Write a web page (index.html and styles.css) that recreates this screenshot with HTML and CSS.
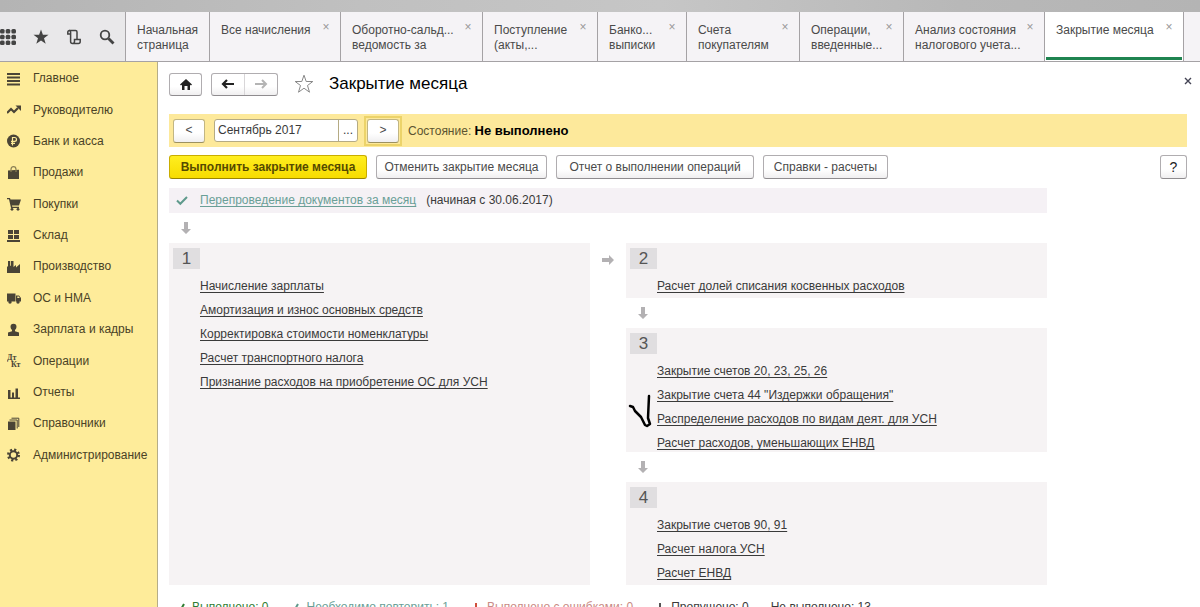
FILE: index.html
```html
<!DOCTYPE html>
<html lang="ru">
<head>
<meta charset="utf-8">
<title>Закрытие месяца</title>
<link rel="stylesheet" href="styles.css">
</head>
<body>
<div class="titlebar"></div>
<header class="topbar">
  <div class="tools">
    <button class="tool" aria-label="Меню"><svg width="16" height="16" viewBox="0 0 16 16"><g fill="#444"><rect x="0" y="0" width="4.600" height="4.600" rx="1.500"/><rect x="5.700" y="0" width="4.600" height="4.600" rx="1.500"/><rect x="11.400" y="0" width="4.600" height="4.600" rx="1.500"/><rect x="0" y="5.700" width="4.600" height="4.600" rx="1.500"/><rect x="5.700" y="5.700" width="4.600" height="4.600" rx="1.500"/><rect x="11.400" y="5.700" width="4.600" height="4.600" rx="1.500"/><rect x="0" y="11.400" width="4.600" height="4.600" rx="1.500"/><rect x="5.700" y="11.400" width="4.600" height="4.600" rx="1.500"/><rect x="11.400" y="11.400" width="4.600" height="4.600" rx="1.500"/></g></svg></button>
    <button class="tool" aria-label="Избранное"><svg width="16" height="16" viewBox="0 0 16 16"><path fill="#444" d="M8 .5l1.900 5.300h5.600l-4.500 3.400 1.700 5.600L8 11.500l-4.700 3.300L5 9.200.5 5.800h5.600z"/></svg></button>
    <button class="tool" aria-label="История"><svg width="16" height="16" viewBox="0 0 16 16" fill="none" stroke="#444" stroke-width="1.500"><path d="M4.500 5H1.800V3.200Q1.800 1.500 3.500 1.500h6Q11 1.500 11 3v7.500h3.200v2Q14.200 14.500 12.500 14.500H6.500Q4.600 14.500 4.600 12.500V3Q4.600 1.500 3.300 1.500M11 10.500H8.500v2Q8.500 14.500 6.500 14.500"/></svg></button>
    <button class="tool" aria-label="Поиск"><svg width="16" height="16" viewBox="0 0 16 16" fill="none" stroke="#444"><circle cx="6" cy="6" r="4.300" stroke-width="1.800"/><path d="M9.500 9.500l5 5" stroke-width="2.800"/></svg></button>
  </div>
  <nav class="tabs">
    <div class="tab"><a href="#">Начальная<br>страница</a></div>
    <div class="tab"><a href="#">Все начисления</a><button class="close" aria-label="Закрыть"></button></div>
    <div class="tab"><a href="#">Оборотно-сальд...<br>ведомость за</a><button class="close" aria-label="Закрыть"></button></div>
    <div class="tab"><a href="#">Поступление<br>(акты,...</a><button class="close" aria-label="Закрыть"></button></div>
    <div class="tab"><a href="#">Банко...<br>выписки</a><button class="close" aria-label="Закрыть"></button></div>
    <div class="tab"><a href="#">Счета<br>покупателям</a><button class="close" aria-label="Закрыть"></button></div>
    <div class="tab"><a href="#">Операции,<br>введенные...</a><button class="close" aria-label="Закрыть"></button></div>
    <div class="tab"><a href="#">Анализ состояния<br>налогового учета...</a><button class="close" aria-label="Закрыть"></button></div>
    <div class="tab tab-active"><a href="#">Закрытие месяца</a><button class="close" aria-label="Закрыть"></button></div>
    <div class="tab tab-rest"></div>
  </nav>
</header>
<div class="layout">
  <aside class="sidebar">
    <ul class="menu">
      <li><a href="#"><svg viewBox="0 0 14 14"><path d="M0 1h13v2H0zM0 4.500h13v2H0zM0 8h13v2H0zM0 11.500h13v2H0z"/></svg>Главное</a></li>
      <li><a href="#"><svg viewBox="0 0 14 14"><path d="M0 10l4-4 3 3 4-4" fill="none" stroke="#4a4436" stroke-width="2.200"/><path d="M8.500 2.500H14V8z"/></svg>Руководителю</a></li>
      <li><a href="#"><svg viewBox="0 0 14 14"><circle cx="6.500" cy="7" r="6.500"/><path d="M5.500 11.500V3.500h2q2 0 2 1.900t-2 1.900H4M4 9.300h4" fill="none" stroke="#feec9a" stroke-width="1.200"/></svg>Банк и касса</a></li>
      <li><a href="#"><svg viewBox="0 0 14 14"><path d="M1 4.500l11-.8V13H1z"/><path d="M4 6V3.500Q4 .7 6.500.7T9 3.500V6" fill="none" stroke="#8b8055" stroke-width="1.200"/></svg>Продажи</a></li>
      <li><a href="#"><svg viewBox="0 0 14 14"><path d="M0 1h3l.5 1.500H14L12 8.500H5l.3 1.200H12V11H4L2 2.300H0z"/><circle cx="5" cy="12.300" r="1.400"/><circle cx="11" cy="12.300" r="1.400"/></svg>Покупки</a></li>
      <li><a href="#"><svg viewBox="0 0 14 14"><path d="M1 1h5v4H1zM7 1h5v4H7zM1 6h5v4H1zM7 6h5v4H7zM0 11h13v2H0z"/></svg>Склад</a></li>
      <li><a href="#"><svg viewBox="0 0 14 14"><path d="M0 13V7l1-1V1h2.200v5L4 5.500V1h2.500v6L9 5v2.500L13 4v9z"/></svg>Производство</a></li>
      <li><a href="#"><svg viewBox="0 0 14 14"><path d="M0 2.500h8.500v8H0zM9 4.500h3L14 7v3.500H9z"/><path d="M10.300 5.500h1.500L12.800 7h-2.500z" fill="#feec9a"/><circle cx="3" cy="11" r="1.700"/><circle cx="11" cy="11" r="1.700"/></svg>ОС и НМА</a></li>
      <li><a href="#"><svg viewBox="0 0 14 14"><path d="M6.500.8Q9.500.8 9.500 4 9.300 6 8 7v1.300l4 1.200V13H1V9.500l4-1.200V7Q3.700 6 3.500 4 3.500.8 6.500.8z"/></svg>Зарплата и кадры</a></li>
      <li><a href="#"><svg viewBox="0 0 14 14" class="ledger"><text x="0" y="6">Дт</text><text x="4" y="13">Кт</text></svg>Операции</a></li>
      <li><a href="#"><svg viewBox="0 0 14 14"><path d="M1 4h2.500v7.500H1zM5 6.500h2v5H5zM8.500 2.500H11v9H8.500zM1 11.500h12V13H1z"/></svg>Отчеты</a></li>
      <li><a href="#"><svg viewBox="0 0 14 14"><path d="M1 4.500h7.500V13H1z"/><path d="M2.500 3h7.700v8.500M4.500 1.200h7.300V10" fill="none" stroke="#4a4436" stroke-width="1"/></svg>Справочники</a></li>
      <li><a href="#"><svg viewBox="0 0 14 14"><circle cx="6.500" cy="7" r="5.300" fill="none" stroke="#4a4436" stroke-width="2.400" stroke-dasharray="2.100 2.060"/><circle cx="6.500" cy="7" r="3.700" fill="none" stroke="#4a4436" stroke-width="2"/></svg>Администрирование</a></li>
    </ul>
  </aside>
  <main class="page">
    <div class="heading">
      <button class="btn icon-btn" aria-label="Домой"><svg width="14" height="13" viewBox="0 0 14 13"><path fill="#222" d="M7 1l6 5.500-1 1-1-.8V12H8.500V8h-3v4H3V6.700l-1 .8-1-1z"/></svg></button>
      <div class="history">
        <button aria-label="Назад"><svg width="14" height="10" viewBox="0 0 14 10"><path fill="none" stroke="#222" stroke-width="2.200" d="M13 5H2M6 1L2 5l4 4"/></svg></button>
        <button aria-label="Вперед"><svg width="14" height="10" viewBox="0 0 14 10"><path fill="none" stroke="#b4b4b4" stroke-width="2" d="M1 5h11M8 1l4 4-4 4"/></svg></button>
      </div>
      <button class="plain star" aria-label="В избранное"><svg width="20" height="20" viewBox="0 0 20 20"><path fill="#fff" stroke="#888" d="M10 1.200l2.200 6.300h6.600l-5.300 4 2 6.700-5.500-4-5.500 4 2-6.700-5.300-4h6.600z"/></svg></button>
      <h1>Закрытие месяца</h1>
      <button class="plain page-close" aria-label="Закрыть"><svg width="8" height="8" viewBox="0 0 8 8"><path stroke="#445" stroke-width="1.400" d="M1 1l6 6M7 1L1 7"/></svg></button>
    </div>
    <div class="period">
      <button class="btn step">&lt;</button>
      <div class="field"><input type="text" value="Сентябрь 2017" aria-label="Период"><button aria-label="Выбрать">...</button></div>
      <span class="focus"><button class="btn step">&gt;</button></span>
      <span class="state">Состояние: <b>Не выполнено</b></span>
    </div>
    <div class="commands">
      <button class="btn primary">Выполнить закрытие месяца</button>
      <button class="btn cancel">Отменить закрытие месяца</button>
      <button class="btn report">Отчет о выполнении операций</button>
      <button class="btn refs">Справки - расчеты</button>
      <button class="btn help">?</button>
    </div>
    <div class="flow">
      <div class="repost">
        <svg width="12" height="10" viewBox="0 0 12 10"><path d="M1 4.500l3.300 3.300L11 1" fill="none" stroke="#5f9a8c" stroke-width="2"/></svg>
        <a href="#">Перепроведение документов за месяц</a>
        <span>(начиная с 30.06.2017)</span>
      </div>
      <div class="connector"><svg width="10" height="12" viewBox="0 0 10 12"><path d="M3 0h4v7h3l-5 5-5-5h3z"/></svg></div>
      <div class="stages">
        <section class="panel">
          <h2>1</h2>
          <ul>
            <li><a href="#">Начисление зарплаты</a></li>
            <li><a href="#">Амортизация и износ основных средств</a></li>
            <li><a href="#">Корректировка стоимости номенклатуры</a></li>
            <li><a href="#">Расчет транспортного налога</a></li>
            <li><a href="#">Признание расходов на приобретение ОС для УСН</a></li>
          </ul>
        </section>
        <div class="across"><svg width="12" height="10" viewBox="0 0 12 10"><path d="M0 3v4h7v3l5-5-5-5v3z"/></svg></div>
        <div class="column">
          <section class="panel">
            <h2>2</h2>
            <ul><li><a href="#">Расчет долей списания косвенных расходов</a></li></ul>
          </section>
          <div class="connector"><svg width="10" height="12" viewBox="0 0 10 12"><path d="M3 0h4v7h3l-5 5-5-5h3z"/></svg></div>
          <section class="panel panel-tight">
            <h2>3</h2>
            <ul>
              <li><a href="#">Закрытие счетов 20, 23, 25, 26</a></li>
              <li><a href="#">Закрытие счета 44 "Издержки обращения"</a></li>
              <li><a href="#">Распределение расходов по видам деят. для УСН</a></li>
              <li><a href="#">Расчет расходов, уменьшающих ЕНВД</a></li>
            </ul>
            <svg class="pen-mark" width="24" height="34" viewBox="0 0 24 34"><path d="M2 12l3 1 2 4 6 6 4 8 2 1 3-2-2-6 1-22" fill="none" stroke="#000" stroke-width="2.500" stroke-linecap="round" stroke-linejoin="round"/></svg>
          </section>
          <div class="connector"><svg width="10" height="12" viewBox="0 0 10 12"><path d="M3 0h4v7h3l-5 5-5-5h3z"/></svg></div>
          <section class="panel">
            <h2>4</h2>
            <ul>
              <li><a href="#">Закрытие счетов 90, 91</a></li>
              <li><a href="#">Расчет налога УСН</a></li>
              <li><a href="#">Расчет ЕНВД</a></li>
            </ul>
          </section>
        </div>
      </div>
      <div class="legend">
        <span class="done"><svg width="10" height="10" viewBox="0 0 10 10"><path d="M1 5l3 3 4-7" fill="none" stroke="#2f7d32" stroke-width="2"/></svg>Выполнено: 0</span>
        <span class="repeat"><svg width="10" height="10" viewBox="0 0 10 10"><path d="M1 5l3 3 4-7" fill="none" stroke="#5f9a8c" stroke-width="2"/></svg>Необходимо повторить: 1</span>
        <span class="errors"><svg width="10" height="10" viewBox="0 0 10 10"><path d="M5 0v6M5 8v2" stroke="#d0503c" stroke-width="2"/></svg>Выполнено с ошибками: 0</span>
        <span><svg width="10" height="10" viewBox="0 0 10 10"><path d="M5 0v9M2 6l3 3 3-3" fill="none" stroke="#555" stroke-width="2"/></svg>Пропущено: 0</span>
        <span>Не выполнено: 13</span>
      </div>
    </div>
  </main>
</div>
</body>
</html>
```
FILE: styles.css
```css
* { box-sizing: border-box; }
body {
  margin: 0;
  height: 100vh;
  overflow: hidden;
  display: flex;
  flex-direction: column;
  background: #fff;
  color: #3a3a3a;
  font: 12px/15px "Liberation Sans", Arial, sans-serif;
}
button, input { font: inherit; color: inherit; }
button { padding: 0; border: 0; background: none; }
a { color: inherit; text-decoration: none; }
ul { list-style: none; margin: 0; padding: 0; }
svg { flex: none; display: block; }

.titlebar { flex: none; height: 12px; background: linear-gradient(90deg, #b4b4b4, #c0c0c0 30%, #c6c6c6 55%, #b8b8b8 80%, #b4b4b4); }
.topbar { flex: none; display: flex; height: 50px; border-bottom: 1px solid #a5a2a5; background: #e9e8ea; }
.tools { flex: none; width: 125px; display: flex; align-items: center; gap: 17px; }
.tool { width: 16px; }
.tabs { flex: 1; display: grid; grid-template-columns: 84fr 131fr 142fr 115fr 89fr 113fr 104fr 141fr 139fr 17fr; }
.tab {
  display: flex;
  justify-content: space-between;
  align-items: flex-start;
  min-width: 0;
  padding: 11px 10px 0 11px;
  border-left: 1px solid #a5a2a5;
  background: #f5f3f6;
  color: #4a4a4a;
  white-space: nowrap;
}
.tab-rest { padding: 0; }
.tab-active { position: relative; background: #fff; }
.tab-active::after { content: ""; position: absolute; left: 1px; right: 1px; bottom: 1px; height: 3px; background: #1f8450; }
.close { width: 8px; height: 8px; margin-left: -8px; font-size: 12px; line-height: 8px; color: #999; }
.close::before { content: "×"; }

.layout { flex: 1; display: flex; min-height: 0; }
.sidebar { flex: none; width: 158px; padding-top: 1px; background: #feec9a; border-right: 1px solid #b5ad88; }
.menu { display: grid; grid-auto-rows: 1fr; height: 408px; }
.menu a { display: flex; align-items: center; gap: 12px; height: 100%; padding-left: 7px; color: #4a4226; }
.menu svg { width: 14px; height: 14px; fill: #4a4436; }
.ledger text { font-family: "Liberation Serif", serif; font-size: 8px; font-weight: bold; }

.page { flex: 1; min-width: 0; padding: 11px 13px 0 11px; }
.btn {
  height: 24px;
  border: 1px solid #b0adb0;
  border-bottom-color: #8f8c8f;
  border-radius: 3px;
  background: linear-gradient(#fff 60%, #f0eff0);
  color: #4a4a4a;
}
.heading { display: flex; align-items: center; height: 22px; }
.icon-btn { width: 33px; height: 23px; display: grid; place-items: center; margin-right: 9px; }
.history { display: flex; width: 67px; height: 23px; border: 1px solid #b0adb0; border-bottom-color: #8f8c8f; border-radius: 3px; background: linear-gradient(#fff 60%, #f0eff0); }
.history button { flex: 1; display: grid; place-items: center; }
.history button + button { border-left: 1px solid #d8d6d8; }
.star { margin: 0 15px 0 16px; }
h1 { margin: 0; font-size: 17px; line-height: 22px; font-weight: normal; color: #000; }
.page-close { margin: 0 -5px 6px auto; }

.period { display: flex; align-items: center; height: 33px; margin-top: 19px; padding-left: 4px; background: #fde99b; }
.step { width: 32px; border-color: #c2b683; border-bottom-color: #9c9160; }
.field { display: flex; width: 144px; height: 23px; margin: 0 6px 0 9px; border: 1px solid #b5ab84; border-radius: 3px; background: #fff; }
.field input { flex: 1; min-width: 0; padding: 0 3px; border: 0; background: none; outline: 0; }
.field button { width: 19px; border-left: 1px solid #b5ab84; }
.focus { display: flex; padding: 1px; border: 2px solid #ecd36a; }
.state { margin-left: 6px; color: #5c5430; }
.state b { font-size: 13px; color: #000; }

.commands { display: flex; gap: 9px; margin: 8px 0 9px; }
.primary { width: 198px; border-color: #c9ad00; border-bottom-color: #9a8500; background: linear-gradient(#ffee20, #f7dc00); color: #554a00; font-weight: bold; }
.cancel { width: 171px; }
.report { width: 198px; }
.refs { width: 125px; }
.help { width: 27px; margin-left: auto; font-size: 14px; color: #222; }

.flow { max-width: 878px; }
.repost { display: flex; align-items: center; height: 25px; padding-left: 7px; background: #f5f1f5; }
.repost a { margin: 0 10px 0 12px; color: #6a9f97; text-decoration: underline; text-underline-offset: 2px; }
.connector { display: flex; align-items: center; height: 30px; padding-left: 12px; }
.connector svg, .across svg { fill: #b3b1b3; }
.stages { display: grid; grid-template-columns: 1fr 36px 1fr; }
.across { padding: 12px 0 0 12px; }
.panel { position: relative; display: flow-root; padding: 5px 4px 0; background: #f6f3f4; }
.panel-tight ul { margin-bottom: -3px; }
.panel h2 { width: 27px; height: 21px; margin: 0 0 5px; background: #e0dee0; font-size: 17px; line-height: 21px; font-weight: normal; text-align: center; color: #555; }
.panel ul { padding-left: 27px; line-height: 24px; }
.panel a { text-decoration: underline; text-underline-offset: 2px; }
.pen-mark { position: absolute; left: 2px; top: 66px; }
.legend { display: flex; gap: 22px; margin-top: 15px; padding-left: 7px; white-space: nowrap; }
.legend span { display: flex; align-items: center; gap: 6px; }
.done { color: #2f7d32; }
.repeat { color: #6a9f97; }
.errors { color: #c98a84; }
```
